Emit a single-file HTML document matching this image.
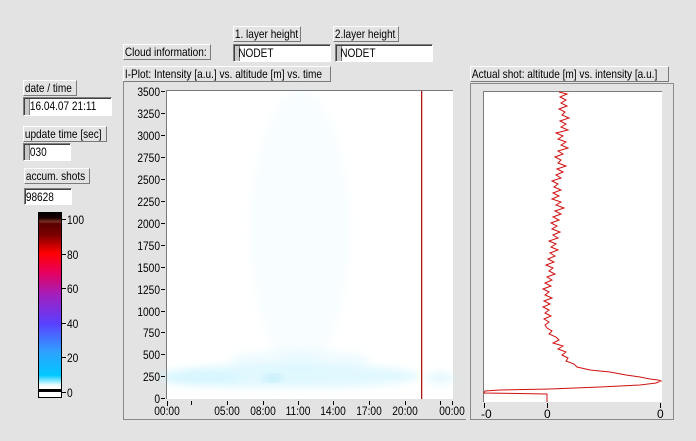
<!DOCTYPE html>
<html><head><meta charset="utf-8"><style>
body{margin:0;width:696px;height:441px;background:#e3e3e3;position:relative;overflow:hidden;font-family:"Liberation Sans",sans-serif;font-size:12px;color:#000}
.a{position:absolute;white-space:nowrap}
.lbl{position:absolute;height:14px;line-height:14px;background:#e3e3e3;border-right:1px solid #7a7a7a;border-bottom:1px solid #7a7a7a;border-top:1px solid #fff;border-left:1px solid #fff;overflow:hidden;white-space:nowrap}
.lbl span,.inp span{display:inline-block;transform:scaleX(0.84);transform-origin:left center;padding-left:1px;white-space:nowrap}
.inp{position:absolute;background:#fff;border-top:1px solid #808080;border-left:1px solid #808080;border-right:1px solid #fff;border-bottom:1px solid #fff;box-shadow:inset 1px 1px 0 #404040;line-height:16px;overflow:hidden;white-space:nowrap}
.stub{position:absolute;left:1px;top:1px;bottom:0;width:4px;background:#c8c8c8;border-right:1px solid #808080}
</style></head><body>

<div class="lbl" style="left:23px;top:80px;width:52px"><span>date / time</span></div>
<div class="inp" style="left:23px;top:97px;width:87px;height:17px"><div class="stub"></div><span style="padding-left:7px">16.04.07 21:11</span></div>
<div class="lbl" style="left:23px;top:126px;width:82px"><span>update time [sec]</span></div>
<div class="inp" style="left:23px;top:143px;width:46px;height:16px"><div class="stub"></div><span style="padding-left:7px">030</span></div>
<div class="lbl" style="left:24px;top:168px;width:64px"><span>accum. shots</span></div>
<div class="inp" style="left:24px;top:188px;width:46px;height:15px"><span style="padding-left:1px">98628</span></div>

<div class="lbl" style="left:123px;top:44px;width:86px"><span>Cloud information:</span></div>
<div class="lbl" style="left:233px;top:26px;width:66px"><span>1. layer height</span></div>
<div class="inp" style="left:233px;top:44px;width:96px;height:16px"><div class="stub"></div><span style="padding-left:5px">NODET</span></div>
<div class="lbl" style="left:333px;top:26px;width:64px"><span>2.layer height</span></div>
<div class="inp" style="left:335px;top:44px;width:96px;height:16px"><div class="stub"></div><span style="padding-left:5px">NODET</span></div>
<div class="lbl" style="left:123px;top:66px;width:206px"><span>I-Plot: Intensity [a.u.] vs. altitude [m] vs. time</span></div>
<div class="lbl" style="left:470px;top:66px;width:197px"><span>Actual shot: altitude [m] vs. intensity [a.u.]</span></div>

<svg class="a" style="left:0;top:0" width="696" height="441" font-family="Liberation Sans, sans-serif" font-size="11.5">
<defs>
<linearGradient id="cb" x1="0" y1="0" x2="0" y2="1">
<stop offset="0" stop-color="#000"/><stop offset="0.03" stop-color="#1a0000"/><stop offset="0.05" stop-color="#7a3020"/><stop offset="0.06" stop-color="#5a0000"/>
<stop offset="0.12" stop-color="#7a0000"/><stop offset="0.22" stop-color="#ff0000"/><stop offset="0.32" stop-color="#e8005a"/>
<stop offset="0.45" stop-color="#a020c0"/><stop offset="0.6" stop-color="#5a40ff"/><stop offset="0.75" stop-color="#30a0ff"/>
<stop offset="0.88" stop-color="#00c8ff"/><stop offset="0.93" stop-color="#e0fbff"/><stop offset="0.94" stop-color="#fff"/><stop offset="1" stop-color="#fff"/>
</linearGradient>
<filter id="bl"><feGaussianBlur stdDeviation="4"/></filter>
</defs>
<rect x="38.5" y="212.5" width="23" height="185" fill="url(#cb)" stroke="#000"/>
<rect x="38" y="389" width="24" height="3" fill="#000"/>
<g stroke="#000"><line x1="62" y1="219.5" x2="66" y2="219.5"/><line x1="62" y1="254.5" x2="66" y2="254.5"/><line x1="62" y1="288.5" x2="66" y2="288.5"/><line x1="62" y1="323.5" x2="66" y2="323.5"/><line x1="62" y1="357.5" x2="66" y2="357.5"/><line x1="62" y1="392.5" x2="66" y2="392.5"/></g>
<g transform="translate(67,0) scale(0.85,1)" font-size="12"><text y="224">100</text><text y="259">80</text><text y="293">60</text><text y="328">40</text><text y="362">20</text><text y="397">0</text></g>

<line x1="123.5" y1="81" x2="123.5" y2="420" stroke="#8a8a8a"/>
<line x1="123" y1="419.5" x2="466" y2="419.5" stroke="#8a8a8a"/>
<rect x="166" y="90" width="287" height="309" fill="#fff"/>
<g filter="url(#bl)" fill="#cdf3ff">
<ellipse cx="300" cy="230" rx="50" ry="140" opacity="0.15"/>
<ellipse cx="290" cy="376" rx="130" ry="12" opacity="0.6"/>
<ellipse cx="200" cy="378" rx="40" ry="8" opacity="0.5"/>
<ellipse cx="300" cy="360" rx="70" ry="10" opacity="0.3"/>
<ellipse cx="440" cy="378" rx="14" ry="6" opacity="0.5"/>
</g>
<ellipse cx="273" cy="378" rx="10" ry="4" fill="#a8e4f8" opacity="0.5" filter="url(#bl)"/>
<line x1="166.5" y1="90" x2="166.5" y2="399" stroke="#7a7a7a"/>
<line x1="166" y1="90.5" x2="453" y2="90.5" stroke="#7a7a7a"/>
<rect x="421" y="91" width="1.3" height="308" fill="#b01818"/>
<g stroke="#000">
<line x1="161" y1="91.5" x2="165" y2="91.5"/><line x1="161" y1="113.5" x2="165" y2="113.5"/><line x1="161" y1="135.5" x2="165" y2="135.5"/><line x1="161" y1="157.5" x2="165" y2="157.5"/><line x1="161" y1="179.5" x2="165" y2="179.5"/><line x1="161" y1="201.5" x2="165" y2="201.5"/><line x1="161" y1="223.5" x2="165" y2="223.5"/><line x1="161" y1="245.5" x2="165" y2="245.5"/><line x1="161" y1="267.5" x2="165" y2="267.5"/><line x1="161" y1="289.5" x2="165" y2="289.5"/><line x1="161" y1="311.5" x2="165" y2="311.5"/><line x1="161" y1="332.5" x2="165" y2="332.5"/><line x1="161" y1="354.5" x2="165" y2="354.5"/><line x1="161" y1="376.5" x2="165" y2="376.5"/><line x1="161" y1="398.5" x2="165" y2="398.5"/>
<line x1="167.5" y1="401" x2="167.5" y2="406"/><line x1="191.5" y1="401" x2="191.5" y2="405"/><line x1="227.5" y1="401" x2="227.5" y2="405"/><line x1="263.5" y1="401" x2="263.5" y2="405"/><line x1="298.5" y1="401" x2="298.5" y2="405"/><line x1="333.5" y1="401" x2="333.5" y2="405"/><line x1="369.5" y1="401" x2="369.5" y2="405"/><line x1="405.5" y1="401" x2="405.5" y2="405"/><line x1="440.5" y1="401" x2="440.5" y2="405"/><line x1="452.5" y1="401" x2="452.5" y2="405"/>
</g>
<g font-size="12" text-anchor="end">
<g transform="translate(160,0) scale(0.85,1)"><text y="96">3500</text><text y="118">3250</text><text y="140">3000</text><text y="162">2750</text><text y="184">2500</text><text y="206">2250</text><text y="228">2000</text><text y="250">1750</text><text y="272">1500</text><text y="294">1250</text><text y="316">1000</text><text y="337">750</text><text y="359">500</text><text y="381">250</text><text y="403">0</text></g>
</g>
<g font-size="12" text-anchor="middle">
<text x="167" y="415" transform="translate(167,0) scale(0.85,1) translate(-167,0)">00:00</text>
<text x="227" y="415" transform="translate(227,0) scale(0.85,1) translate(-227,0)">05:00</text>
<text x="263" y="415" transform="translate(263,0) scale(0.85,1) translate(-263,0)">08:00</text>
<text x="298" y="415" transform="translate(298,0) scale(0.85,1) translate(-298,0)">11:00</text>
<text x="333" y="415" transform="translate(333,0) scale(0.85,1) translate(-333,0)">14:00</text>
<text x="369" y="415" transform="translate(369,0) scale(0.85,1) translate(-369,0)">17:00</text>
<text x="405" y="415" transform="translate(405,0) scale(0.85,1) translate(-405,0)">20:00</text>
<text x="452" y="415" transform="translate(452,0) scale(0.85,1) translate(-452,0)">00:00</text>
</g>

<rect x="470.5" y="83.5" width="203" height="336" fill="none" stroke="#8a8a8a"/>
<rect x="483" y="91" width="179" height="311" fill="#fff"/>
<line x1="483.5" y1="91" x2="483.5" y2="402" stroke="#7a7a7a"/>
<line x1="483" y1="91.5" x2="662" y2="91.5" stroke="#7a7a7a"/>
<polyline fill="none" stroke="#d01010" stroke-width="1" points="
559,92 567,94 560,97 566,100 561,103 567,106 559,109 565,112 562,115 569,118 560,121 566,124 561,127 568,130 556,133 563,136 558,139 566,142 561,145 568,148 558,151 563,154 555,157 561,160 558,163 566,166 557,169 563,172 556,175 561,178 552,181 558,184 554,187 561,190 553,193 559,196 552,199 561,202 556,205 564,208 555,211 561,214 553,217 559,220 551,223 557,226 552,229 560,232 553,235 558,238 549,241 556,244 551,247 558,250 550,253 555,256 548,259 554,262 546,265 553,268 549,271 555,274 547,277 552,280 545,283 551,286 543,289 549,292 545,295 552,298 544,301 550,304 543,307 549,310 545,313 551,316 544,319 549,322 545,325 547,328 552,331 549,334 556,337 559,340 553,343 563,346 558,349 566,352 562,355 568,358 566,361 574,364 577,367 590,370 610,372 626,375 640,377 650,379 658,380 661,381 656,383 640,385 600,387 550,389 500,390 485,391 484,393 547,394 547,402"/>
<g stroke="#000"><line x1="484.5" y1="403" x2="484.5" y2="408"/><line x1="547.5" y1="403" x2="547.5" y2="408"/><line x1="660.5" y1="403" x2="660.5" y2="408"/></g>
<g font-size="12"><text x="481" y="418">-0</text><text x="544" y="418">0</text><text x="657" y="418">0</text></g>
</svg>
</body></html>
